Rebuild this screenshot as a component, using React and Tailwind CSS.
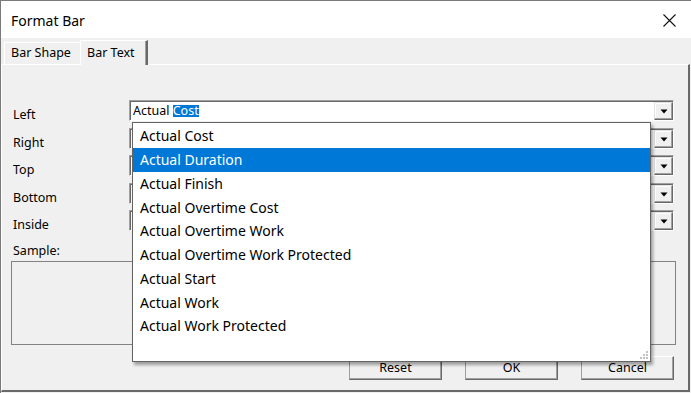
import React from "react";

const rowMargins = ["", "mt-[7px]", "mt-[6px]", "mt-[7px]", "mt-[6px]"];
const labels = ["Left", "Right", "Top", "Bottom", "Inside"];
const items = [
  "Actual Cost",
  "Actual Duration",
  "Actual Finish",
  "Actual Overtime Cost",
  "Actual Overtime Work",
  "Actual Overtime Work Protected",
  "Actual Start",
  "Actual Work",
  "Actual Work Protected",
];

function Arrow() {
  return (
    <div className="w-[19px] h-full bg-[#f0f0f0] border-t border-l border-t-[#e3e3e3] border-l-[#e3e3e3] border-r border-b border-r-[#696969] border-b-[#696969] shadow-[inset_-1px_-1px_0_#a0a0a0,inset_1px_1px_0_#ffffff] flex items-center justify-center">
      <svg width="8" height="5" viewBox="0 0 8 5">
        <path d="M0.5 0.5 H7.5 L4 4.5 Z" fill="#000" />
      </svg>
    </div>
  );
}

function Combo({ children }) {
  return (
    <div className="flex-1 h-[21px] bg-white border-t border-l border-t-[#a0a0a0] border-l-[#a0a0a0] border-r border-b border-r-[#ffffff] border-b-[#ffffff] shadow-[inset_1px_1px_0_#696969] flex">
      <div className="flex-1 flex items-center pl-[3px] pt-[1px] text-[12.5px] text-black leading-none">
        {children}
      </div>
      <div className="pt-[1px] h-full">
        <Arrow />
      </div>
    </div>
  );
}

function Btn({ children }) {
  return (
    <div className="w-[93px] h-[24px] bg-[#f0f0f0] border-t border-l border-t-[#ffffff] border-l-[#a0a0a0] border-r border-b border-r-[#696969] border-b-[#696969] shadow-[inset_-1px_-1px_0_#a0a0a0] flex items-center justify-center text-[12.5px] text-black pt-[1px]">
      {children}
    </div>
  );
}

export default function App() {
  return (
    <div className="relative w-[691px] h-[393px] bg-[#f0f0f0] border-t border-l border-[#7a7a7a] flex flex-col overflow-hidden font-['Noto_Sans',sans-serif]">
      {/* Title bar */}
      <div className="h-[37px] bg-white flex items-center justify-between pl-[10px] pr-[14px] shrink-0">
        <span className="text-[14px] text-black pt-[1px]">Format Bar</span>
        <svg width="13" height="13" viewBox="0 0 13 13" className="mr-[1px] mt-[2px]">
          <path d="M0.5 0.5 L12.5 12.5 M12.5 0.5 L0.5 12.5" stroke="#111" strokeWidth="1.1" />
        </svg>
      </div>

      {/* Tab strip */}
      <div className="h-[26px] flex items-end pl-[3px] shrink-0">
        <div className="w-[76px] h-[22px] border-t border-l border-white flex items-center pl-[6px] text-[12.5px] text-black">
          Bar Shape
        </div>
        <div className="relative z-10 w-[68px] h-[25px] mb-[-1px] bg-[#f0f0f0] border-t border-l border-white border-r-2 border-r-[#696969] shadow-[inset_-1px_0_0_#a0a0a0] flex items-start pt-[3px] pl-[6px] text-[12.5px] text-black">
          Bar Text
        </div>
      </div>

      {/* Panel */}
      <div className="flex-1 mr-[1px] mb-[1px] border-t border-l border-white border-r-2 border-b-2 border-r-[#696969] border-b-[#696969] flex flex-col pl-[11px] pr-[14px] pt-[35px]">
        {labels.map((l, i) => (
          <div key={l} className={`flex items-center h-[21px] ${rowMargins[i]}`}>
            <div className="w-[116px] text-[12.5px] text-black pt-[9px]">{l}</div>
            <Combo>
              {i === 0 ? (
                <>
                  <span>Actual&nbsp;</span>
                  <span className="bg-[#0078d7] text-white">Cost</span>
                </>
              ) : null}
            </Combo>
          </div>
        ))}
        <div className="mt-[12px] h-[16px] text-[12.5px] text-black leading-[16px]">Sample:</div>
        <div className="mt-[2px] ml-[-2px] w-[665px] h-[84px] border border-[#828282]" />
        <div className="mt-[11px] flex justify-end gap-[23px]">
          <Btn>Reset</Btn>
          <Btn>OK</Btn>
          <Btn>Cancel</Btn>
        </div>
      </div>

      {/* Dropdown list (overlay) */}
      <div className="absolute left-[131px] top-[121px] w-[519px] h-[240px] bg-white border border-[#646464] shadow-[2px_3px_3px_rgba(0,0,0,0.35)] z-20">
        <div className="flex flex-col pt-[1px]">
          {items.map((it, i) => (
            <div
              key={it}
              className={`h-[23.75px] flex items-center pl-[7px] text-[14px] ${
                i === 1 ? "bg-[#0078d7] text-white" : "text-black"
              }`}
            >
              {it}
            </div>
          ))}
        </div>
        <svg width="10" height="10" viewBox="0 0 10 10" className="absolute right-[1px] bottom-[1px]">
          <rect x="7" y="1" width="2" height="2" fill="#c2c2c2" />
          <rect x="4" y="4" width="2" height="2" fill="#c2c2c2" />
          <rect x="7" y="4" width="2" height="2" fill="#c2c2c2" />
          <rect x="1" y="7" width="2" height="2" fill="#c2c2c2" />
          <rect x="4" y="7" width="2" height="2" fill="#c2c2c2" />
          <rect x="7" y="7" width="2" height="2" fill="#c2c2c2" />
        </svg>
      </div>
    </div>
  );
}
